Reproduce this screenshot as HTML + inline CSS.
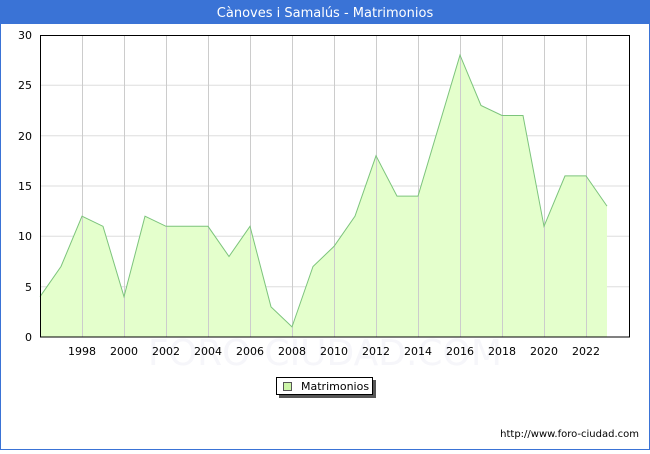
<!DOCTYPE html>
<html><head><meta charset="utf-8"><style>
body{margin:0;width:650px;height:450px;overflow:hidden;background:#fff;font-family:"DejaVu Sans","Liberation Sans",sans-serif}
</style></head><body>
<svg width="650" height="450" xmlns="http://www.w3.org/2000/svg" font-family="DejaVu Sans, Liberation Sans, sans-serif">
<rect x="0.5" y="0.5" width="649" height="449" fill="#fff" stroke="#3a73d6"/>
<rect x="0" y="0" width="650" height="24" fill="#3a73d6"/>
<text x="325" y="17" font-size="13" fill="#fff" text-anchor="middle">Cànoves i Samalús - Matrimonios</text>
<text x="325" y="365" font-size="36" fill="#f6f6fa" text-anchor="middle">FORO-CIUDAD.COM</text>
<g stroke="#ddd" stroke-width="1">
<line x1="40" y1="286.7" x2="630" y2="286.7"/><line x1="40" y1="236.3" x2="630" y2="236.3"/>
<line x1="40" y1="186" x2="630" y2="186"/><line x1="40" y1="135.7" x2="630" y2="135.7"/>
<line x1="40" y1="85.3" x2="630" y2="85.3"/>
</g>
<polygon fill="#e4ffcc" points="40,337 40,296.7 61,266.5 82,216.2 103,226.3 124,296.7 145,216.2 166,226.3 187,226.3 208,226.3 229,256.5 250,226.3 271,306.8 292,326.9 313,266.5 334,246.4 355,216.2 376,155.8 397,196.1 418,196.1 439,125.6 460,55.1 481,105.5 502,115.5 523,115.5 544,226.3 565,175.9 586,175.9 607,206.1 607,337"/>
<g stroke="#ccc" stroke-width="1">
<line x1="82.5" y1="35" x2="82.5" y2="337"/><line x1="124.5" y1="35" x2="124.5" y2="337"/><line x1="166.5" y1="35" x2="166.5" y2="337"/><line x1="208.5" y1="35" x2="208.5" y2="337"/><line x1="250.5" y1="35" x2="250.5" y2="337"/><line x1="292.5" y1="35" x2="292.5" y2="337"/><line x1="334.5" y1="35" x2="334.5" y2="337"/><line x1="376.5" y1="35" x2="376.5" y2="337"/><line x1="418.5" y1="35" x2="418.5" y2="337"/><line x1="460.5" y1="35" x2="460.5" y2="337"/><line x1="502.5" y1="35" x2="502.5" y2="337"/><line x1="544.5" y1="35" x2="544.5" y2="337"/><line x1="586.5" y1="35" x2="586.5" y2="337"/>
</g>
<polyline fill="none" stroke="#7cc47c" stroke-width="1" points="40,296.7 61,266.5 82,216.2 103,226.3 124,296.7 145,216.2 166,226.3 187,226.3 208,226.3 229,256.5 250,226.3 271,306.8 292,326.9 313,266.5 334,246.4 355,216.2 376,155.8 397,196.1 418,196.1 439,125.6 460,55.1 481,105.5 502,115.5 523,115.5 544,226.3 565,175.9 586,175.9 607,206.1"/>
<rect x="40.5" y="35.5" width="589" height="301.5" fill="none" stroke="#000"/>
<g font-size="11" fill="#000" text-anchor="end">
<text x="32" y="341">0</text><text x="32" y="291">5</text><text x="32" y="240">10</text><text x="32" y="190">15</text><text x="32" y="140">20</text><text x="32" y="89">25</text><text x="32" y="39">30</text>
</g>
<g font-size="11" fill="#000" text-anchor="middle">
<text x="82" y="355">1998</text><text x="124" y="355">2000</text><text x="166" y="355">2002</text><text x="208" y="355">2004</text><text x="250" y="355">2006</text><text x="292" y="355">2008</text><text x="334" y="355">2010</text><text x="376" y="355">2012</text><text x="418" y="355">2014</text><text x="460" y="355">2016</text><text x="502" y="355">2018</text><text x="544" y="355">2020</text><text x="586" y="355">2022</text>
</g>
<rect x="279" y="380" width="97" height="18" fill="#555"/>
<rect x="276.5" y="377.5" width="96" height="17" fill="#fff" stroke="#000"/>
<rect x="283.5" y="382.5" width="8" height="8" fill="#ccf5a8" stroke="#555"/>
<text x="301" y="390" font-size="11">Matrimonios</text>
<text x="639" y="437" font-size="10" text-anchor="end">http://www.foro-ciudad.com</text>
</svg>
</body></html>
